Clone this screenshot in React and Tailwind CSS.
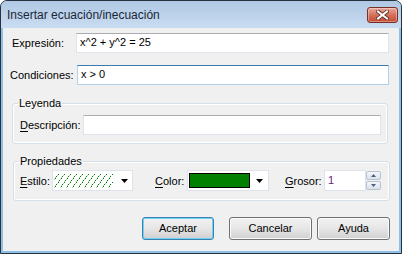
import React from "react";

const CloseButton = () => (
  <div className="w-[31px] h-[16px] rounded-[3px] border border-[#7a2f24] bg-gradient-to-b from-[#e9a99a] via-[#d4705c] to-[#c44a32] flex items-center justify-center shadow-[inset_0_0_0_1px_rgba(255,255,255,0.35)]">
    <svg width="13" height="10" viewBox="0 0 13 10">
      <path d="M2 1.5 L11 8.5 M11 1.5 L2 8.5" stroke="#5a2a22" strokeWidth="3.6" strokeLinecap="square" />
      <path d="M2 1.5 L11 8.5 M11 1.5 L2 8.5" stroke="#ffffff" strokeWidth="2" strokeLinecap="square" />
    </svg>
  </div>
);

const TextBox = ({ width, focused, children }) => (
  <div
    className={`${width} h-[20px] bg-white border pl-[3px] pt-[2px] leading-[13px] ${
      focused
        ? "border-[#b5cfe7] border-t-[#3d7bad]"
        : "border-[#e2e3ea] border-t-[#abadb3]"
    }`}
  >
    {children}
  </div>
);

const DropArrow = () => (
  <svg width="7" height="4" viewBox="0 0 7 4" className="shrink-0">
    <path d="M0 0 H7 L3.5 4 Z" fill="#000" />
  </svg>
);

// diagonal hatch lines, drawn pixel by pixel
const Hatch = () => {
  const dots = [];
  for (let x0 = -12; x0 < 59; x0 += 6) {
    for (let y = 1; y < 15; y++) {
      if (y % 2 === 0) continue;
      const x = x0 + Math.round((14 - y) * 0.75);
      if (x >= 0 && x < 59) {
        dots.push(<rect key={`${x0}-${y}`} x={x} y={y} width="1" height="1" fill="#008000" />);
        if (x + 1 < 59) dots.push(<rect key={`${x0}-${y}b`} x={x - 1} y={y + 1} width="1" height="1" fill="#008000" opacity="0.35" />);
      }
    }
  }
  return (
    <svg width="59" height="16" viewBox="0 0 59 16" shapeRendering="crispEdges">
      {dots}
    </svg>
  );
};

const SpinArrow = ({ up }) => (
  <svg width="5" height="3" viewBox="0 0 5 3">
    <path d={up ? "M0 3 H5 L2.5 0 Z" : "M0 0 H5 L2.5 3 Z"} fill="#4b5f84" />
  </svg>
);

const Button = ({ width, primary, children }) => (
  <div
    className={`${width} h-[23px] rounded-[3px] border flex items-center justify-center bg-gradient-to-b from-[#f2f2f2] via-[#e6e6e6] to-[#d0d0d0] ${
      primary
        ? "border-[#3c7fb1] shadow-[inset_0_0_0_1px_#6ed2f5]"
        : "border-[#707070] shadow-[inset_0_0_0_1px_#fbfbfb]"
    }`}
  >
    {children}
  </div>
);

export default function App() {
  return (
    <div className="w-[402px] h-[254px] flex flex-col border border-[#27313c] rounded-t-[7px] overflow-hidden bg-[#8fc0e8] text-[11px] leading-[13px] text-black font-['Liberation_Sans',Arial,sans-serif]">
      {/* Title bar */}
      <div className="h-[27px] shrink-0 flex items-center justify-between pl-[6px] pr-[3px] bg-gradient-to-b from-[#b0c8e4] to-[#c9dcf1]">
        <span className="text-[12px] leading-[14px] text-[#1a2636]">Insertar ecuación/inecuación</span>
        <CloseButton />
      </div>

      {/* Client area */}
      <div className="flex-1 mx-[2px] mb-[2px] bg-[#f0f0f0] flex flex-col pt-[5px]">
        <div className="flex items-center h-[20px]">
          <span className="ml-[9px] w-[64px] pt-[1px]">Expresión:</span>
          <TextBox width="w-[313px]">x^2 + y^2 = 25</TextBox>
        </div>
        <div className="flex items-center h-[20px] mt-[12px]">
          <span className="ml-[7px] w-[67px] pt-[1px]">Condiciones:</span>
          <TextBox width="w-[312px]" focused>
            x &gt; 0
          </TextBox>
        </div>

        {/* Leyenda */}
        <fieldset className="mt-[12px] ml-[9px] w-[376px] border border-[#d5dfe5] rounded-[3px] pl-[7px] pt-[5px] pb-[8px] shadow-[inset_0_0_0_1px_#fff]">
          <legend className="-ml-[2px] px-[1px] leading-[13px]">Leyenda</legend>
          <div className="flex items-center h-[20px]">
            <span className="w-[63px]">
              <span className="underline underline-offset-[2px]">D</span>escripción:
            </span>
            <TextBox width="w-[298px]" />
          </div>
        </fieldset>

        {/* Propiedades */}
        <fieldset className="mt-[11px] ml-[10px] w-[377px] border border-[#d5dfe5] rounded-[3px] pl-[6px] pt-[2px] pb-[9px] shadow-[inset_0_0_0_1px_#fff]">
          <legend className="-ml-[1px] px-[1px] leading-[13px]">Propiedades</legend>
          <div className="flex items-center h-[21px]">
            <span className="w-[32px] pt-[1px]">
              <span className="underline underline-offset-[2px]">E</span>stilo:
            </span>
            <div className="w-[81px] h-[21px] bg-white border border-[#dde3e9] flex items-center pl-[1px] pr-[4px] justify-between">
              <Hatch />
              <DropArrow />
            </div>
            <span className="ml-[22px] w-[32px] pt-[1px]">
              <span className="underline underline-offset-[2px]">C</span>olor:
            </span>
            <div className="w-[82px] h-[21px] bg-white border border-[#dde3e9] flex items-center pl-[1px] pr-[5px] justify-between">
              <div className="w-[61px] h-[15px] bg-[#008000] border border-black" />
              <DropArrow />
            </div>
            <span className="ml-[16px] w-[39px] pt-[1px]">
              <span className="underline underline-offset-[2px]">G</span>rosor:
            </span>
            <div className="w-[42px] h-[21px] bg-white border border-[#dde3e9] pl-[3px] pt-[3px] text-[#6b1a78]">1</div>
            <div className="w-[15px] h-[19px] flex flex-col gap-[1px]">
              <div className="flex-1 border border-[#b8c3d2] rounded-[2px] bg-gradient-to-b from-[#f4f6f9] to-[#dbe2ea] flex items-center justify-center">
                <SpinArrow up />
              </div>
              <div className="flex-1 border border-[#b8c3d2] rounded-[2px] bg-gradient-to-b from-[#f4f6f9] to-[#dbe2ea] flex items-center justify-center">
                <SpinArrow />
              </div>
            </div>
          </div>
        </fieldset>

        {/* Buttons */}
        <div className="flex justify-end pr-[9px] mt-[16px]">
          <Button width="w-[72px]" primary>
            Aceptar
          </Button>
          <div className="ml-[15px]">
            <Button width="w-[83px]">Cancelar</Button>
          </div>
          <div className="ml-[5px]">
            <Button width="w-[73px]">Ayuda</Button>
          </div>
        </div>
      </div>
    </div>
  );
}
